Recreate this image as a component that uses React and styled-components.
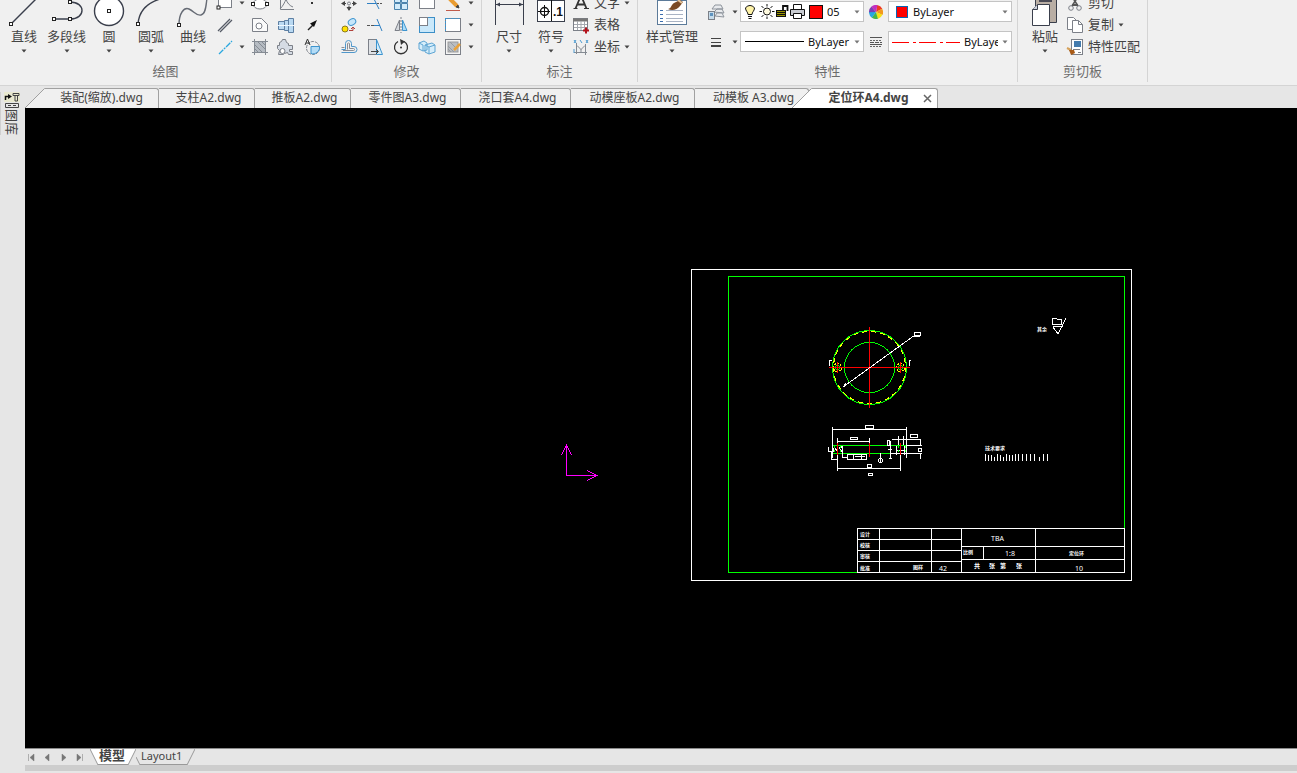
import React, { useState } from 'react';
import styled, { createGlobalStyle, css } from 'styled-components';

const GlobalStyle = createGlobalStyle`
  * {
    box-sizing: border-box;
  }

  html, body, #root {
    height: 100%;
    margin: 0;
  }

  body {
    overflow: hidden;
    font-family: "Noto Sans", "Noto Sans CJK SC", sans-serif;
    font-size: 13px;
    color: #444;
    background: #e6e6e6;
  }

  button, select {
    margin: 0;
    padding: 0;
    border: none;
    background: none;
    font: inherit;
    color: inherit;
  }

  svg {
    display: block;
    flex: none;
  }
`;

const Window = styled.div`
  display: flex;
  flex-direction: column;
  height: 100%;
`;

const Ribbon = styled.header`
  display: flex;
  height: 86px;
  padding-bottom: 3px;
  overflow: hidden;
  background: #f0f0f0;
  border-bottom: 1px solid #d4d4d4;
`;

const GroupBox = styled.section`
  display: flex;
  flex-direction: column;
  flex: none;
  border-right: 1px solid #d4d4d4;
`;

const GroupBody = styled.div`
  display: flex;
  align-items: flex-end;
  height: 58px;
  padding: ${props => props.$pad || '0'};
`;

const GroupTitle = styled.h2`
  margin: 0;
  font-size: 13px;
  font-weight: normal;
  line-height: 26px;
  text-align: center;
  color: #6c6c6c;
`;

const BigButton = styled.button`
  display: flex;
  flex-direction: column;
  align-items: center;
  flex: none;
  width: ${props => props.$width || 42}px;
  line-height: 16px;
  white-space: nowrap;

  &:hover {
    background: #dcebf7;
  }
`;

const ArrowBox = styled.span`
  display: flex;
  align-items: center;
  justify-content: center;
  height: 14px;
`;

const IconGrid = styled.div`
  display: grid;
  grid-template-columns: ${props => props.$columns};
  grid-auto-rows: 22px;
`;

const IconButton = styled.button`
  display: flex;
  align-items: center;
  justify-content: center;
  min-width: 0;

  &:hover {
    background: #dcebf7;
  }
`;

const CommandList = styled.div`
  display: flex;
  flex-direction: column;
`;

const Command = styled.button`
  display: flex;
  align-items: center;
  gap: 4px;
  height: 22px;
  line-height: 20px;
  white-space: nowrap;

  &:hover {
    background: #dcebf7;
  }
`;

const CommandName = styled.span`
  padding-bottom: 2px;
`;

const PropertyGrid = styled.div`
  display: grid;
  grid-template-columns: 28px 10px 124px 24px 124px;
  row-gap: 9px;
  align-items: center;
  padding-bottom: 6px;
`;

const Combo = styled.label`
  display: flex;
  align-items: center;
  gap: 4px;
  height: 21px;
  padding: 0 3px;
  background: #fff;
  border: 1px solid #c4c4c4;
`;

const ComboSelect = styled.select`
  flex: 1;
  min-width: 0;
  height: 19px;
  appearance: none;
  outline: none;
  font-size: 11px;
  color: #111;
`;

const Swatch = styled.span`
  flex: none;
  width: ${props => props.$size}px;
  height: ${props => props.$size}px;
  margin-left: ${props => props.$indent || 0}px;
  margin-right: ${props => props.$after || 0}px;
  background: #f00;
  border: 1px solid ${props => props.$edge};
`;

const Middle = styled.div`
  display: flex;
  flex: 1;
  min-height: 0;
`;

const Sidebar = styled.aside`
  flex: none;
  width: 25px;
  padding-top: 6px;
`;

const LibraryButton = styled.button`
  display: flex;
  flex-direction: column;
  align-items: center;
  width: 22px;
  border-left: 1px solid #cfcfcf;
`;

const LibraryLabel = styled.span`
  writing-mode: vertical-rl;
  text-orientation: sideways;
  font-size: 13px;
  line-height: 14px;
`;

const Workspace = styled.main`
  display: flex;
  flex-direction: column;
  flex: 1;
  min-width: 0;
`;

const FileTabs = styled.div`
  display: flex;
  flex: none;
  height: 22px;
  padding-top: 2px;
`;

const Tab = styled.button`
  flex: none;
  width: ${props => props.$width}px;
  height: 20px;
  padding: 0 0 2px 4px;
  font-size: 12px;
  line-height: 16px;
  white-space: nowrap;
  background: #f0f0f0;
  border-top: 1px solid #a0a0a0;
  border-right: 1px solid #a0a0a0;
  border-top-right-radius: 3px;

  &:nth-of-type(1) {
    padding-left: 0;
  }
`;

const ActiveTab = styled.div`
  display: flex;
  align-items: center;
  flex: none;
  gap: 12px;
  width: 126px;
  height: 20px;
  padding: 0 5px 0 14px;
  background: #fff;
  border-top: 1px solid #a0a0a0;
  border-right: 1px solid #a0a0a0;
  border-top-right-radius: 3px;
`;

const ActiveTitle = styled.button`
  flex: 1;
  padding-bottom: 2px;
  font-size: 12px;
  font-weight: bold;
  line-height: 16px;
  white-space: nowrap;
`;

const Slant = styled.span`
  flex: none;
  margin-left: ${props => (props.$overlap ? -17 : 0)}px;
  z-index: 1;
`;

const Canvas = styled.div`
  flex: 1;
  min-height: 0;
  overflow: hidden;
  background: #000;

  svg {
    width: 1272px;
    height: 640px;
  }
`;

const LayoutBar = styled.footer`
  display: flex;
  flex: none;
  height: 25px;
  border-top: 1px solid #8a8a8a;
  background: linear-gradient(#e6e6e6 16px, #cdcdcd 16px, #cdcdcd 22px, #e6e6e6 22px);
`;

const NavButton = styled.button`
  display: flex;
  align-items: center;
  width: 16px;
  height: 17px;
  padding-left: 2px;
`;

const LayoutTab = styled.button`
  display: flex;
  height: 16px;
  line-height: 13px;
  white-space: nowrap;

  span {
    height: 16px;
    border-bottom: 1px solid #999;
  }

  ${props => (props.$active ? css`
    margin-left: 1px;
    font-size: 13px;
    font-weight: bold;

    span { background: #fff; padding: 0 3px 0 1px; }
  ` : css`
    font-size: 11px;

    span { padding: 0 5px 0 1px; }
  `)}
`;

const Caret = ({ color = '#444' }) => (
  <svg width="6" height="4" viewBox="0 0 6 4"><path d="M0.5 0.5h5L3 3.5z" fill={color} /></svg>
);

const Icon = ({ children, size = 18 }) => (
  <svg width={size} height={size} viewBox="0 0 18 18" fill="none" stroke="#7c8088">{children}</svg>
);

const BigIcon = ({ children }) => (
  <svg width="42" height="28" viewBox="0 0 42 28" fill="none" stroke="#3a3f4c" strokeWidth="1.4">{children}</svg>
);

const Node = ({ x, y }) => (
  <rect x={x - 1.5} y={y - 1.5} width="3" height="3" fill="#fff" stroke="#222" strokeWidth="1" />
);

const bigIcons = {
  line: <BigIcon><path d="M8 24L33-1" /><Node x={8} y={24} /></BigIcon>,
  polyline: (
    <BigIcon>
      <path d="M8 19h16c16 0 16-17 0-17" />
      <Node x={8} y={19} /><Node x={24} y={19} /><Node x={24} y={2} />
    </BigIcon>
  ),
  circle: <BigIcon><circle cx="21" cy="11" r="14.5" fill="#fff" /><Node x={21} y={11} /></BigIcon>,
  arc: <BigIcon><path d="M8 24C9 11 17 3 30-1" /><Node x={8} y={24} /></BigIcon>,
  spline: (
    <BigIcon>
      <path d="M7 25C7 13 12 7 17 9s7 7 12 6 5-10 6-17" stroke="#666b75" /><Node x={7} y={25} />
    </BigIcon>
  ),
  dimension: (
    <BigIcon>
      <path d="M7.5 0v25M35.5 0v25M8 4.5h27" strokeWidth="1" />
      <path d="M8 4.5l4-2v4zM35 4.5l-4-2v4z" fill="#3a3f4c" stroke="none" />
    </BigIcon>
  ),
  symbol: (
    <BigIcon>
      <rect x="7.5" y="0.5" width="27" height="21" fill="#fff" strokeWidth="1" />
      <path d="M21.5 0v21M8 11.5h12M14.5 5v13" strokeWidth="1" stroke="#111" />
      <circle cx="14.5" cy="11.5" r="4" stroke="#111" />
      <text x="23" y="16" fontSize="12" fontWeight="bold" fill="#111" stroke="none" fontFamily="Liberation Sans, sans-serif">.1</text>
    </BigIcon>
  ),
  style: (
    <BigIcon>
      <rect x="6.5" y="0.5" width="29" height="24" fill="#fff" stroke="#5b7a99" strokeWidth="1" />
      <path d="M15 10.5h17M15 14.5h17M15 18.5h17M15 21.5h17" stroke="#a9b3c4" strokeWidth="1" />
      <path d="M9 10.5h3M9 14.5h3M9 18.5h3M9 21.5h3" stroke="#3d6fae" strokeWidth="1" />
      <path d="M17 9c3 0 3-4 6-6l6-3 3 2-3 4c-3 4-8 5-12 3z" fill="#7a4a25" stroke="none" />
      <path d="M27 0l4 3" stroke="#e3c39a" strokeWidth="2" />
    </BigIcon>
  ),
  paste: (
    <BigIcon>
      <path d="M11.5 0v22.5h21V0" fill="#b9aea4" strokeWidth="1" />
      <path d="M16 0v1h11V0" stroke="#4a4a55" strokeWidth="2" />
      <path d="M13.5 4.5h12v21h-17v-16z" fill="#fff" strokeWidth="1" />
      <path d="M13.5 4.5v5h-5" fill="#cdd2dd" strokeWidth="1" />
    </BigIcon>
  ),
};

const drawTools = [
  ['矩形', <Icon><rect x="2.5" y="3.5" width="13" height="10" fill="#fff" /><Node x={2.5} y={13.5} /></Icon>],
  'arrow',
  ['椭圆', <Icon><ellipse cx="9" cy="10" rx="7" ry="5" fill="#fff" /><Node x={2} y={10} /><Node x={16} y={10} /></Icon>],
  ['截交线', <Icon><path d="M3.500 1v14.500H17M3 15C6 12 8 8 9 5c1 4 4 7 7 8" /></Icon>],
  ['点', <Icon><path d="M8 9h2" stroke="#333" strokeWidth="2" /></Icon>],
  ['平行线', <Icon><path d="M2 15L14 3M4 16L16 4" stroke="#555b66" strokeWidth="1.300" /></Icon>],
  null,
  ['轮廓', <Icon><path d="M1.500 15.500v-13h9l6 6v7z" fill="#fafafa" /><circle cx="8" cy="10" r="3" fill="#fff" /></Icon>],
  ['轴', (
    <Icon>
      <path d="M1.500 5.500h6v8h-6zM7.500 4.500h4v10h-4zM11.500 2.500h5v14h-5z" fill="#b9d9f2" stroke="#5d7fa3" />
      <path d="M0 9.500h18" stroke="#eef7ff" />
    </Icon>
  )],
  ['引线', <Icon><path d="M5 14l6-6" stroke="#222" strokeWidth="1.500" /><path d="M14 4l-7 3.500L11 11z" fill="#111" stroke="none" /></Icon>],
  ['中心线', <Icon><path d="M3 16L16 3" stroke="#29a7df" strokeWidth="1.300" strokeDasharray="6 1 2 1" /></Icon>],
  'arrow',
  ['填充', (
    <Icon>
      <rect x="3.500" y="3.500" width="11" height="11" fill="#b5bbc2" />
      <path d="M1 3.500h16M1 14.500h16M3.500 1v16M14.500 1v16M4 7l7 7M4 11l3 3M7 4l7 7M11 4l3 3" stroke="#858b93" />
    </Icon>
  )],
  ['齿轮', (
    <Icon>
      <path d="M2.500 4.500l2-1 1-2h3l1 3 2 1v2h4v4l-3 0v2h3v3h-4l-1-2-3 1-1 1H1.500l1-4-2-2v-3h2z" fill="#d5dbe4" />
      <circle cx="5.500" cy="13" r="2.500" fill="#fff" />
    </Icon>
  )],
  ['局部放大', (
    <Icon>
      <circle cx="10" cy="10" r="6.500" strokeDasharray="3 1" />
      <path d="M8 8.500h8.500a6.500 6.500 0 0 1-8.500 7z" fill="#b4dcf6" stroke="#3c94cf" />
      <path d="M2 7L4.500 1 7 7M3 5h3" stroke="#333" />
    </Icon>
  )],
];

const editTools = [
  ['移动', <Icon><path d="M9 2v4M9 12v4M2 9.500h4M12 9.500h4" stroke="#444" /><path d="M1 9.500l4-2.500v5zM17 9.500l-4-2.500v5zM9 17l-2.500-4h5z" fill="#444" stroke="none" /><circle cx="9" cy="9.500" r="1.500" /></Icon>],
  ['裁剪', <Icon><path d="M1 9.500h9M7 3l6 12" stroke="#2e7fc2" /><path d="M11 9.500h6" stroke="#555" strokeDasharray="2 1" /></Icon>],
  ['阵列', <Icon><path d="M2.500 2.500h6v6h-6zM9.500 2.500h6v6h-6zM2.500 9.500h6v6h-6zM9.500 9.500h6v6h-6z" fill="#d3ebfa" stroke="#4b83ad" /></Icon>],
  ['窗口', <Icon><rect x="1.500" y="2.500" width="15" height="12" fill="#fff" /></Icon>],
  ['删除', <Icon><path d="M4 3l9 9" stroke="#e99c31" strokeWidth="4" /><path d="M12 13l3 1-1-3z" fill="#444" stroke="#444" /><path d="M2 16.500h14" stroke="#c05a4a" /></Icon>],
  'arrow',
  ['平移复制', (
    <Icon>
      <ellipse cx="12" cy="6" rx="4" ry="3" transform="rotate(-30 12 6)" fill="#c6e6fa" stroke="#3c94cf" />
      <circle cx="5" cy="13" r="3" fill="#ffe100" stroke="#8a7a20" /><path d="M9 14.500h4v-3M11 13l2-2 2 2" stroke="#b0413b" />
    </Icon>
  )],
  ['延伸', <Icon><path d="M1 9.500h7" stroke="#555" strokeDasharray="3 1" /><path d="M8 9.500h6M11 3l5 12" stroke="#2e7fc2" /></Icon>],
  ['镜像', <Icon><path d="M7.500 4v10.500H3z" fill="#d5d9de" /><path d="M10.500 4v10.500H15z" fill="#a9daf7" stroke="#3c94cf" /><path d="M9 1v16" strokeDasharray="2 1" /></Icon>],
  ['缩放', <Icon><rect x="1.500" y="1.500" width="15" height="15" fill="#c9e8fa" stroke="#3c8fc7" /><rect x="1.500" y="1.500" width="8" height="8" fill="#fff" /></Icon>],
  ['打断', <Icon><rect x="1.500" y="2.500" width="15" height="13" fill="#fff" /><path d="M1.500 2.500h15M1.500 2v13" stroke="#3c94cf" strokeDasharray="2 1" /></Icon>],
  'arrow',
  ['偏移', (
    <Icon>
      <path d="M1.500 11.500h4V5.500a3 3 0 0 1 6 0v3h2.500a3 3 0 0 1 0 6H1.500" stroke="#4f97cb" />
      <path d="M1.500 9.500h3M7.500 11.500v-6a1.500 1.500 0 0 1 2 0v5h4a1 1 0 0 1 0 2H3" stroke="#8a8e95" />
    </Icon>
  )],
  ['拉伸', <Icon><rect x="2.500" y="1.500" width="8" height="15" fill="#dfe2e6" /><path d="M10.500 1.500L16.500 16.500h-6z" fill="#d1ecfb" stroke="#3c94cf" /><path d="M5 13.500h7M10 11l2.500 2.500L10 16" stroke="#444" /></Icon>],
  ['旋转', <Icon><path d="M12 3.500A6.500 6.500 0 1 1 6 3.500" stroke="#333" strokeWidth="1.300" /><path d="M8 1l5 2.500L9 7z" fill="#333" stroke="none" /><circle cx="9" cy="9.500" r="1" fill="#333" stroke="none" /></Icon>],
  ['分解', (
    <Icon>
      <path d="M1 5l5-2 3 2v7l-4 1-4-2zM7 7l7-2 3 2v7l-6 2-4-2z" fill="#d6edfa" stroke="#5ea5d3" />
      <path d="M7 7l4 2 6-2M11 9v7M1 5l4 2v6" stroke="#5ea5d3" />
    </Icon>
  )],
  ['编辑填充', (
    <Icon>
      <rect x="1.500" y="1.500" width="15" height="15" fill="#f4f4f4" /><rect x="4" y="4" width="10" height="10" fill="#b9bdc2" stroke="#999" />
      <path d="M4 8l6 6M4 11l3 3M6 4l7 7" stroke="#969ba1" />
      <path d="M10 12l6-6" stroke="#e9a23b" strokeWidth="2.500" />
    </Icon>
  )],
  'arrow',
];

const noteCommands = [
  { name: '文字', arrow: true, icon: <Icon><path d="M3.500 14.500L9 1.500l5.500 13M5.500 10.500h7" stroke="#333" strokeWidth="1.800" /><path d="M1.500 14.500h4M12 14.500h5" stroke="#333" /></Icon> },
  { name: '表格', icon: (
    <Icon>
      <rect x="1.500" y="2.500" width="14" height="12" fill="#fff" /><path d="M1 4h15" strokeWidth="3" stroke="#777" />
      <path d="M2 8.500h13M2 11.500h13M5.500 5v9M9 5v9M12.500 5v9" stroke="#a4a8ae" /><path d="M11 14.500h6M14 11.500v6" stroke="#b3121b" strokeWidth="2" />
    </Icon>
  ) },
  { name: '坐标', arrow: true, icon: (
    <Icon>
      <path d="M4.500 5v11M2 14.500h13M5 7.500l4 4 4-4M13.500 6v11M9 11v4" stroke="#848a92" />
      <path d="M2 2l2 3M4 2L2 5M8 2l2 3M14 2l2 3M16 2l-2 3M2 11v4" stroke="#4c9bd1" />
    </Icon>
  ) },
];

const clipCommands = [
  { name: '剪切', icon: <Icon><path d="M5 1l7 11M13 1L6 12" stroke="#555" strokeWidth="1.600" /><circle cx="5" cy="14" r="2.300" /><circle cx="13" cy="14" r="2.300" /><path d="M6 11h6" stroke="#555" strokeWidth="2" /></Icon> },
  { name: '复制', arrow: true, icon: <Icon><path d="M1.500 1.500h6l3 3v9h-9z" fill="#fff" /><path d="M6.500 4.500h6l4 4v8h-10z" fill="#fff" /><path d="M12.500 4.500v4h4" /></Icon> },
  { name: '特性匹配', icon: (
    <Icon>
      <rect x="5.500" y="1.500" width="11" height="15" fill="#fff" /><rect x="8" y="3" width="7" height="6" fill="#447cae" stroke="none" />
      <path d="M7 11.500h7M12 14.500h3" /><path d="M1 10l4 2" stroke="#d5a15b" strokeWidth="2" /><path d="M3 12l5 0 1 3-4 2z" fill="#a95b17" stroke="none" />
    </Icon>
  ) },
];

const Group = ({ title, pad, children }) => (
  <GroupBox aria-label={title}>
    <GroupBody $pad={pad}>{children}</GroupBody>
    <GroupTitle>{title}</GroupTitle>
  </GroupBox>
);

const Big = ({ label, icon, width }) => (
  <BigButton type="button" $width={width}>
    {bigIcons[icon]}
    {label}
    <ArrowBox><Caret /></ArrowBox>
  </BigButton>
);

const Tools = ({ items, columns }) => (
  <IconGrid $columns={columns}>
    {items.map((item, i) => {
      if (item === null) return <span key={i} />;
      if (item === 'arrow') return <IconButton key={i} type="button" aria-label="更多"><Caret /></IconButton>;
      return <IconButton key={i} type="button" aria-label={item[0]}>{item[1]}</IconButton>;
    })}
  </IconGrid>
);

const Commands = ({ items }) => (
  <CommandList>
    {items.map(item => (
      <Command key={item.name} type="button">
        {item.icon}
        <CommandName>{item.name}</CommandName>
        {item.arrow && <ArrowBox><Caret /></ArrowBox>}
      </Command>
    ))}
  </CommandList>
);

const PropertyCombo = ({ label, value, children }) => (
  <Combo>
    {children}
    <ComboSelect aria-label={label} defaultValue={value}>
      <option>{value}</option>
    </ComboSelect>
    <Caret color="#777" />
  </Combo>
);

const LayerState = () => (
  <svg width="61" height="19" viewBox="0 0 61 19" fill="none" stroke="#111">
    <path d="M4 12.500C4 10 1.500 9 1.500 6a5 4.500 0 0 1 9 0c0 3-2.500 4-2.500 6.500z" fill="#fff3a8" />
    <path d="M4 14.500h4M4.500 16.500h3" />
    <circle cx="23" cy="9.500" r="3.500" fill="#fffbe0" />
    <path d="M23 2v2.500M23 14.500V17M15.500 9.500H18M28 9.500h2.500M17.500 4l2 2M26.500 13l2 2M28.500 4l-2 2M19.500 13l-2 2" />
    <path d="M39 9V4h4.500v5" strokeWidth="1.800" />
    <rect x="32.500" y="8.500" width="9" height="6" fill="#9a9400" />
    <path d="M32 10.500h10M32 12.500h10" />
    <path d="M49.500 7V2.500h8V7" fill="#fff" />
    <path d="M46.500 7.500h14v6h-14z" fill="#c9ccd2" />
    <path d="M49.500 11.500h8v5h-8z" fill="#fff" />
  </svg>
);

const ColorWheel = () => (
  <svg width="14" height="14" viewBox="-7 -7 14 14">
    {['#ef3b24', '#f39a1e', '#f5e313', '#45b649', '#27a9e1', '#7b3fb3', '#c22fc0'].map((c, i) => (
      <path key={c} d="M0 0L0-7A7 7 0 0 1 5.700-4.200z" fill={c} transform={`rotate(${i * 51.4 + 10})`} />
    ))}
  </svg>
);

const Sheet = () => (
  <svg viewBox="25 108 1272 640" fill="none" stroke="#fff" shapeRendering="crispEdges" role="img" aria-label="定位环A4">
    {/* coordinate axes */}
    <g stroke="#f0f">
      <path d="M566.500 446v29.500H597" />
      <path d="M561.500 455l5-9.500 5 9.500M587 470.500l10 5-10 5" />
    </g>

    {/* frame */}
    <rect x="691.500" y="269.500" width="440" height="311" />
    <path d="M857 572.500H728.500v-296h396v252" stroke="#0f0" />

    {/* front view */}
    <circle cx="869.500" cy="367.500" r="37" stroke="#0f0" />
    <circle cx="869.500" cy="367.500" r="36" stroke="#ff0" strokeDasharray="5 4" />
    <circle cx="869.500" cy="367.500" r="25" stroke="#0f0" />
    <circle cx="837.500" cy="367.500" r="4" stroke="#ff0" strokeDasharray="2 1" />
    <circle cx="837.500" cy="367.500" r="2" stroke="#0f0" strokeDasharray="2 1" />
    <circle cx="900.500" cy="367.500" r="4" stroke="#ff0" strokeDasharray="2 1" />
    <circle cx="900.500" cy="367.500" r="2" stroke="#0f0" strokeDasharray="2 1" />
    <path d="M869.500 327v81M829 367.500h81M837.500 362v11M900.500 362v11" stroke="#f00" />
    <path d="M843 387l70-50.500h7M829.500 366v-6h2M909.500 366v-6h1M846 383l-2 3" />
    <rect x="914.500" y="332.500" width="6" height="3" />

    {/* section */}
    <path d="M832 445.500h75M832 453.500h75" stroke="#0f0" />
    <path d="M832.500 427v31M906.500 427v31M833 429.500h73M837.500 438v6M869.500 438v6M838 441.500h31M837.500 455v16M900.500 455v16M838 468.500h62" />
    <path d="M865.500 425.500h8v3h-8zM850.500 437.500h7v2h-7zM867.500 464.500h4v3h-4zM868.500 473.500h4v2h-4zM910.500 434.500h7v3h-7zM918.500 448.500h3v3h-3z" />
    <path d="M833 448v4M842.500 446v11h5M847.500 454.500h19v4.500h-19zM853.500 454v5M861.500 454v5M855 456.500h10M828.500 447v4h4M831.500 452v7h6M834 447l4 5M839 447l3 5M841 446l2 3" />
    <path d="M889.500 440v5h-2v-5zM892 439.500h29M890.500 441v18M898.500 436v9M903.500 436v9M889 458.500h3M888 449.500h4M891 453.500h31M907 445.500h15M920.500 440v6M920.500 453v6M896.500 446v9M904.500 446v9M897 450.500h7" />
    <path d="M880.500 453v9" />
    <circle cx="880.500" cy="460.500" r="2" />
    <path d="M837.500 443v12M869.500 443v14M900.500 443v12" stroke="#f00" />
    <path d="M898.500 446v8M905.500 446v8M834.500 446v8M840.500 446v8" stroke="#0f0" strokeDasharray="2 2" />

    {/* roughness mark and notes */}
    <path d="M1052.500 324.500v-6h4l1 1h4v5zM1052.500 326.500h10M1053 327l5 7 8-16" />
    <path d="M985.500 454v7M988.500 455v6M991.500 455v6M994.500 457v4M997.500 454v7M1000.500 455v6M1003.500 457v4M1006.500 454v7M1009.500 455v6M1012.500 455v6M1015.500 454v7M1018.500 454v7M1022.500 454v7M1026.500 454v7M1030.500 454v7M1034.500 454v7M1039.500 457v4M1043.500 454v7M1047.500 454v7" />

    {/* title block */}
    <rect x="857.500" y="528.500" width="267" height="44" />
    <path d="M879.500 528v44M931.500 528v44M961.500 528v44M1035.500 528v44M983.500 546v13M857 539.500h104M857 550.500h104M857 561.500h104M961 546.500h163M961 559.500h163" />
    <g fill="#fff" stroke="none" fontSize="5" fontWeight="bold">
      <text x="1037" y="331">其余</text>
      <text x="985" y="450">技术要求</text>
      <text x="860" y="536">设计</text>
      <text x="860" y="547">校核</text>
      <text x="860" y="558">审核</text>
      <text x="860" y="570">批准</text>
      <text x="913" y="569">图样</text>
      <text x="963" y="554">比例</text>
      <text x="1069" y="555">定位环</text>
      <text x="974" y="568" fontSize="6">共</text>
      <text x="989" y="568" fontSize="6">张</text>
      <text x="1000" y="568" fontSize="6">第</text>
      <text x="1016" y="568" fontSize="6">张</text>
    </g>
    <g fill="#fff" stroke="none" fontSize="7">
      <text x="939" y="571">42</text>
      <text x="991" y="541">TBA</text>
      <text x="1005" y="556">1:8</text>
      <text x="1075" y="571">10</text>
    </g>
  </svg>
);

const files = [
  { name: '装配(缩放).dwg', width: 114 },
  { name: '支柱A2.dwg', width: 96 },
  { name: '推板A2.dwg', width: 96 },
  { name: '零件图A3.dwg', width: 110 },
  { name: '浇口套A4.dwg', width: 110 },
  { name: '动模座板A2.dwg', width: 124 },
  { name: '动模板 A3.dwg', width: 114 },
];

const navIcons = [
  ['第一个', 'M1.500 1v7M7 1v7L3 4.500z'],
  ['上一个', 'M6 1v7L2 4.500z'],
  ['下一个', 'M3 1v7l4-3.500z'],
  ['最后一个', 'M2 1v7l4-3.500zM7.500 1v7'],
];

const App = () => {
  const [layout, setLayout] = useState('model');

  return (
    <Window>
      <GlobalStyle />
      <Ribbon>
        <Group title="绘图" pad="0 6px 0 3px">
          <Big label="直线" icon="line" />
          <Big label="多段线" icon="polyline" width={43} />
          <Big label="圆" icon="circle" />
          <Big label="圆弧" icon="arc" />
          <Big label="曲线" icon="spline" />
          <Tools items={drawTools} columns="22px 11px 26px 26px 26px" />
        </Group>
        <Group title="修改" pad="0 5px 0 4px">
          <Tools items={editTools} columns="repeat(5, 26px) 10px" />
        </Group>
        <Group title="标注" pad="0 7px 0 6px">
          <Big label="尺寸" icon="dimension" />
          <Big label="符号" icon="symbol" />
          <Commands items={noteCommands} />
        </Group>
        <Group title="特性" pad="0 5px 0 4px">
          <Big label="样式管理" icon="style" width={60} />
          <PropertyGrid>
            <IconButton type="button" aria-label="图层">
              <Icon>
                <path d="M5 6l3-4h6l2 4zM7 9l3-3h5l2 4z" fill="#e8eaed" stroke="#8e949c" />
                <path d="M8 13l2-3h5l2 4z" fill="#e8eaed" stroke="#8e949c" />
                <rect x="1.500" y="8.500" width="6" height="8" fill="#c6dbea" /><path d="M3 10h3v3H3z" fill="#5e93bf" stroke="none" />
              </Icon>
            </IconButton>
            <IconButton type="button" aria-label="图层选项"><Caret /></IconButton>
            <PropertyCombo label="图层" value="05">
              <LayerState />
              <Swatch $size={14} $edge="#111" />
            </PropertyCombo>
            <IconButton type="button" aria-label="颜色"><ColorWheel /></IconButton>
            <PropertyCombo label="颜色" value="ByLayer">
              <Swatch $size={12} $indent={4} $after={1} $edge="#0a64b4" />
            </PropertyCombo>
            <IconButton type="button" aria-label="线宽">
              <Icon><path d="M4 5.500h10M4 9.500h10" stroke="#444" /><path d="M4 13h10" stroke="#444" strokeWidth="2" /></Icon>
            </IconButton>
            <IconButton type="button" aria-label="线宽选项"><Caret /></IconButton>
            <PropertyCombo label="线宽" value="ByLayer">
              <svg width="60" height="3"><path d="M1 1.500h59" stroke="#000" /></svg>
            </PropertyCombo>
            <IconButton type="button" aria-label="线型">
              <Icon><path d="M3 4.500h12M3 11.500h12" stroke="#555" /><path d="M3 7.500h12M3 13.500h12" stroke="#666" strokeDasharray="2 1" /><path d="M3 9.500h12" stroke="#555" strokeDasharray="4 1" /></Icon>
            </IconButton>
            <PropertyCombo label="线型" value="ByLayer">
              <svg width="68" height="3"><path d="M0 2.500h68" stroke="#f00" strokeDasharray="17 4 3 3" /></svg>
            </PropertyCombo>
          </PropertyGrid>
        </Group>
        <Group title="剪切板" pad="0 7px 0 6px">
          <Big label="粘贴" icon="paste" />
          <Commands items={clipCommands} />
        </Group>
      </Ribbon>

      <Middle>
        <Sidebar>
          <LibraryButton type="button">
            <svg width="16" height="17" viewBox="0 0 16 17" fill="none" stroke="#444">
              <rect width="16" height="10" fill="#e9e9cf" stroke="none" />
              <path d="M1.500 8V4.500H6" stroke="#111" strokeWidth="1.500" /><path d="M4 2l4 2.500L4 7z" fill="#111" stroke="none" />
              <path d="M9 1.500h6v2H9zM11 4v5h2.500V4" /><path d="M1.500 11.500h13v4h-13zM4 13.500h3M9 13.500h3" />
            </svg>
            <LibraryLabel>图库</LibraryLabel>
          </LibraryButton>
        </Sidebar>
        <Workspace>
          <FileTabs role="tablist" aria-label="文件">
            <Slant>
              <svg width="20" height="20" viewBox="0 0 20 20"><path d="M0 20L20 0.500V20z" fill="#f0f0f0" /><path d="M0 20L19.500 0.500h1" fill="none" stroke="#a0a0a0" /></svg>
            </Slant>
            {files.map(file => (
              <Tab key={file.name} type="button" role="tab" aria-selected="false" $width={file.width}>{file.name}</Tab>
            ))}
            <Slant $overlap>
              <svg width="20" height="20" viewBox="0 0 20 20"><path d="M0 20L20 0.500V20z" fill="#fff" /><path d="M0 20L19.500 0.500h1" fill="none" stroke="#a0a0a0" /></svg>
            </Slant>
            <ActiveTab>
              <ActiveTitle type="button" role="tab" aria-selected="true">定位环A4.dwg</ActiveTitle>
              <button type="button" aria-label="关闭">
                <svg width="9" height="9" viewBox="0 0 9 9"><path d="M1 1l7 7M8 1L1 8" stroke="#666" strokeWidth="1.500" /></svg>
              </button>
            </ActiveTab>
          </FileTabs>
          <Canvas><Sheet /></Canvas>
          <LayoutBar>
            {navIcons.map(([name, d]) => (
              <NavButton key={name} type="button" aria-label={name}>
                <svg width="9" height="9" viewBox="0 0 9 9"><path d={d} fill="#777" stroke="#777" strokeWidth="0.500" /></svg>
              </NavButton>
            ))}
            <LayoutTab type="button" $active aria-pressed={layout === 'model'} onClick={() => setLayout('model')}>
              <svg width="8" height="16" viewBox="0 0 8 16"><path d="M0 0h8v16z" fill="#fff" /><path d="M0 0l8 16" stroke="#999" /></svg>
              <span>模型</span>
              <svg width="8" height="16" viewBox="0 0 8 16"><path d="M8 0H0v16z" fill="#fff" /><path d="M8 0L0 16" stroke="#999" /></svg>
            </LayoutTab>
            <LayoutTab type="button" aria-pressed={layout === 'layout1'} onClick={() => setLayout('layout1')}>
              <svg width="4" height="16" viewBox="0 0 4 16"><path d="M0 8l4 8" stroke="#999" /></svg>
              <span>Layout1</span>
              <svg width="8" height="16" viewBox="0 0 8 16"><path d="M8 0L0 16" stroke="#999" /></svg>
            </LayoutTab>
          </LayoutBar>
        </Workspace>
      </Middle>
    </Window>
  );
};

export default App;
